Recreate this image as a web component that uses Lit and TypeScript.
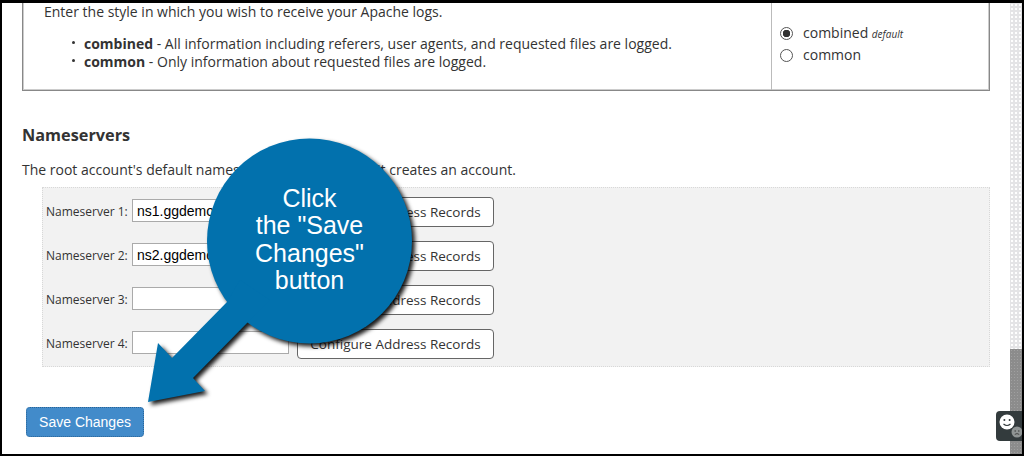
import { LitElement, html, css, svg } from 'lit';
import { customElement } from 'lit/decorators.js';

const NAMESERVERS = [
  { label: 'Nameserver 1:', value: 'ns1.ggdemo.com' },
  { label: 'Nameserver 2:', value: 'ns2.ggdemo.com' },
  { label: 'Nameserver 3:', value: '' },
  { label: 'Nameserver 4:', value: '' },
];

@customElement('app-root')
export class AppRoot extends LitElement {
  static styles = css`
    :host {
      display: block;
      width: 1024px;
      height: 456px;
    }

    .frame {
      position: relative;
      box-sizing: border-box;
      width: 1024px;
      height: 456px;
      display: flex;
      overflow: hidden;
      background: #fff;
      border: solid #000;
      border-width: 3px 2px 2px 2px;
      font-family: 'Open Sans', sans-serif;
      font-size: 14px;
      line-height: 18px;
      color: #333;
    }

    .page {
      flex: 1;
      min-width: 0;
      padding: 0 20px;
    }

    /* apache log style table, cut off by the top of the screenshot */
    .option {
      box-sizing: border-box;
      height: 88px;
      display: flex;
      border: 1px solid #888;
      border-top: 0;
      box-shadow: inset 1px -1px 0 #ccc, inset -1px 0 0 #ccc;
    }

    .option-text {
      flex: 1;
      padding: 0 0 0 21px;
    }

    .option-text p {
      margin: 0;
    }

    .option-text ul {
      margin: 14px 0 0;
      padding: 0 0 0 40px;
      list-style: none;
    }

    .option-text li {
      position: relative;
    }

    .option-text li::before {
      content: '';
      position: absolute;
      left: -12px;
      top: 6px;
      width: 3px;
      height: 3px;
      border-radius: 50%;
      background: #333;
    }

    .option-values {
      box-sizing: border-box;
      width: 218px;
      padding: 19px 0 0 8px;
      border-left: 1px solid #bbb;
    }

    .radio {
      display: flex;
      align-items: center;
      height: 22px;
      gap: 10px;
    }

    .radio input {
      appearance: none;
      box-sizing: border-box;
      width: 13px;
      height: 13px;
      margin: 0;
      border: 1px solid #555;
      border-radius: 50%;
      background: #fff;
    }

    .radio input:checked {
      background: radial-gradient(circle, #333 0 3.5px, #fff 4px);
    }

    .radio em {
      font-size: 10px;
    }

    h2 {
      margin: 34px 0 0;
      font-size: 16.3px;
      line-height: 20px;
      font-weight: 700;
    }

    .intro {
      margin: 16px 0 0;
    }

    .servers {
      box-sizing: border-box;
      height: 180px;
      margin: 8px 0 0 20px;
      padding: 9px 0 0 3px;
      display: grid;
      grid-template-columns: 86px 165px 1fr;
      grid-auto-rows: 30px;
      row-gap: 14px;
      background: #f2f2f2;
      border: 1px dotted #d8d8d8;
      font-size: 12px;
    }

    .servers label {
      line-height: 30px;
      white-space: nowrap;
    }

    .servers input {
      box-sizing: border-box;
      width: 157px;
      height: 23px;
      margin: 2px 0 0;
      padding: 0 4px;
      border: 1px solid #aaa;
      background: #fff;
      color: #000;
      font-family: 'Liberation Sans', Arial, sans-serif;
      font-size: 14px;
    }

    .btn-config {
      box-sizing: border-box;
      width: 197px;
      height: 30px;
      padding: 0;
      border: 1px solid #666;
      border-radius: 4px;
      background: #fff;
      color: #333;
      font-family: 'Open Sans', sans-serif;
      font-size: 13.5px;
    }

    .btn-save {
      box-sizing: border-box;
      display: block;
      width: 118px;
      height: 30px;
      margin: 40px 0 0 4px;
      padding: 0;
      border: 1px dotted #2a6496;
      border-radius: 4px;
      background: #428bca;
      color: #fff;
      font-family: 'Liberation Sans', Arial, sans-serif;
      font-size: 14px;
    }

    .scrollbar {
      width: 12px;
      flex: none;
      display: flex;
      flex-direction: column;
      background: #e4e4e6 radial-gradient(circle, #fff 0 0.7px, transparent 1px) 0 0 / 4px 4px;
    }

    .scrollbar-thumb {
      margin-top: auto;
      height: 105px;
      background: #8c8c8c radial-gradient(circle, #a0a0a0 0 0.7px, transparent 1px) 0 0 / 3px 3px;
    }

    .chat {
      position: absolute;
      right: 0;
      top: 408px;
      width: 26px;
      height: 30px;
      border-radius: 4px 0 0 4px;
      background: #333b3d;
    }

    .chat svg {
      display: block;
    }

    /* tutorial annotation painted over the page */
    .callout {
      position: absolute;
      left: -2px;
      top: -3px;
      width: 1024px;
      height: 456px;
      pointer-events: none;
    }

    .callout svg {
      position: absolute;
      inset: 0;
      filter: drop-shadow(3px 3px 2px rgba(0, 0, 0, 0.9));
    }

    .callout-text {
      position: absolute;
      left: 207px;
      top: 185px;
      width: 205px;
      color: #fff;
      font-family: 'Liberation Sans', Arial, sans-serif;
      font-size: 25px;
      line-height: 27.4px;
      text-align: center;
    }
  `;

  render() {
    return html`
      <div class="frame">
        <div class="page">
          <section class="option">
            <div class="option-text">
              <p>Enter the style in which you wish to receive your Apache logs.</p>
              <ul>
                <li><b>combined</b> - All information including referers, user agents, and requested files are logged.</li>
                <li><b>common</b> - Only information about requested files are logged.</li>
              </ul>
            </div>
            <div class="option-values">
              <label class="radio"><input type="radio" name="log" checked /><span>combined <em>default</em></span></label>
              <label class="radio"><input type="radio" name="log" /><span>common</span></label>
            </div>
          </section>

          <h2>Nameservers</h2>
          <p class="intro">The root account's default nameservers as used when it creates an account.</p>

          <div class="servers">
            ${NAMESERVERS.map(
              (ns) => html`
                <label>${ns.label}</label>
                <input type="text" .value=${ns.value} />
                <button class="btn-config">Configure Address Records</button>
              `
            )}
          </div>

          <button class="btn-save">Save Changes</button>
        </div>

        <div class="scrollbar"><div class="scrollbar-thumb"></div></div>

        <div class="chat">
          <svg width="26" height="30" viewBox="0 0 26 30">
            <circle cx="21" cy="21" r="5.5" fill="#8f9494" />
            <circle cx="19.2" cy="20" r="0.8" fill="#444" />
            <circle cx="22.8" cy="20" r="0.8" fill="#444" />
            <path d="M18.8 23.4 Q21 21.8 23.2 23.4" stroke="#444" fill="none" />
            <circle cx="11" cy="11" r="7.5" fill="#fff" />
            <circle cx="8.4" cy="9" r="1" fill="#333b3d" />
            <circle cx="13.6" cy="9" r="1" fill="#333b3d" />
            <path d="M7.5 13 Q11 16 14.5 13" stroke="#333b3d" stroke-width="1.2" fill="none" />
          </svg>
        </div>

        <div class="callout">
          <svg width="1024" height="456" viewBox="0 0 1024 456">
            ${svg`<g fill="#0271ad">
              <circle cx="309.5" cy="241" r="102.5" />
              <path d="M227 302 L172 358 L158 343 L148 402 L205 391 L193 378 L247 323 L270 300 L240 280 Z" />
            </g>`}
          </svg>
          <div class="callout-text">Click<br />the "Save<br />Changes"<br />button</div>
        </div>
      </div>
    `;
  }
}

declare global {
  interface HTMLElementTagNameMap {
    'app-root': AppRoot;
  }
}
